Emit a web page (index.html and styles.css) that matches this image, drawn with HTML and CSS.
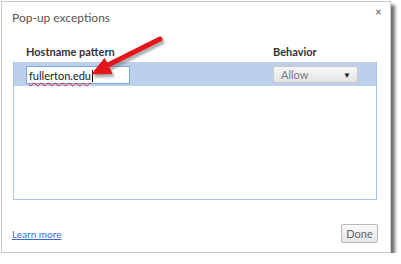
FILE: index.html
```html
<!DOCTYPE html>
<html lang="en">
<head>
  <meta charset="UTF-8">
  <title>Pop-up exceptions</title>
  <link rel="stylesheet" href="styles.css">
</head>
<body>
  <div class="dialog">
    <div class="header">
      <span class="title">Pop-up exceptions</span>
      <span class="close">&#x2715;</span>
    </div>

    <div class="content">
      <div class="columns">
        <span>Hostname pattern</span>
        <span>Behavior</span>
      </div>
      <div class="list">
        <div class="row selected">
          <div class="host-input"><span class="typed">fullerton.edu</span><span class="caret"></span></div>
          <div class="behavior-select">
            <span>Allow</span>
            <span class="drop">&#9660;</span>
          </div>
        </div>
      </div>
    </div>

    <div class="footer">
      <a href="#" class="learn">Learn more</a>
      <button class="done">Done</button>
    </div>
  </div>

  <svg class="pointer" width="401" height="264" viewBox="0 0 401 264">
    <defs>
      <filter id="soft" x="-20%" y="-20%" width="140%" height="140%">
        <feGaussianBlur stdDeviation="1.2"/>
      </filter>
    </defs>
    <g transform="translate(2,3)" fill="#777" stroke="#777" opacity="0.6" filter="url(#soft)">
      <line x1="160" y1="39" x2="106" y2="66" stroke-width="5" stroke-linecap="round"/>
      <polygon points="92,74 104.5,58.5 112,73.5" stroke-width="1"/>
    </g>
    <g fill="#e3161b" stroke="#e3161b">
      <line x1="160" y1="39" x2="106" y2="66" stroke-width="5" stroke-linecap="round"/>
      <polygon points="92,74 104.5,58.5 112,73.5" stroke-width="1" stroke-linejoin="round"/>
    </g>
  </svg>
</body>
</html>
```

FILE: styles.css
```css
body {
  margin: 0;
  background: #fff;
  font-family: Lato, "Noto Sans", sans-serif;
  position: relative;
}
.dialog {
  box-sizing: border-box;
  width: 390px;
  height: 252px;
  margin: 1px 0 0 1px;
  background: #fff;
  border: 1px solid #c8c8c8;
  box-shadow: 4px 4px 3px rgba(0, 0, 0, 0.55);
  display: flex;
  flex-direction: column;
}
.header {
  height: 36px;
  padding: 8px 8px 0 10px;
  box-sizing: border-box;
  display: flex;
  justify-content: space-between;
  align-items: flex-start;
}
.title {
  font-size: 12px;
  color: #555;
}
.close {
  font-size: 8px;
  font-weight: bold;
  color: #777;
  margin-top: -3px;
}
.content {
  padding: 0 13px 0 11px;
}
.columns {
  height: 24px;
  box-sizing: border-box;
  display: grid;
  grid-template-columns: 247px 1fr;
  align-items: end;
  padding: 0 0 4px 13px;
  font-size: 11px;
  font-weight: bold;
  color: #333;
}
.list {
  height: 138px;
  box-sizing: border-box;
  border: 1px solid #a9c7ee;
  border-top: none;
}
.row {
  height: 24px;
  box-sizing: border-box;
  display: grid;
  grid-template-columns: 247px 85px;
  align-items: start;
  padding: 4px 0 0 12px;
}
.selected {
  background: #bcd0ec;
}
.host-input {
  width: 104px;
  height: 18px;
  box-sizing: border-box;
  background: #fff;
  border: 1px solid #7ba7e4;
  font-size: 11px;
  color: #222;
  padding: 1px 0 0 2px;
  display: flex;
  align-items: center;
}
.typed {
  text-decoration: underline wavy #e02020;
  text-decoration-thickness: 1px;
  text-underline-offset: 2px;
}
.caret {
  display: inline-block;
  width: 1px;
  height: 12px;
  background: #000;
  margin-left: 1px;
}
.behavior-select {
  height: 17px;
  box-sizing: border-box;
  border: 1px solid #c9c9c9;
  border-radius: 2px;
  background: linear-gradient(#f8f8f8, #e4e4e4);
  display: flex;
  justify-content: space-between;
  align-items: center;
  padding: 0 6px 0 7px;
  font-size: 11px;
  color: #7a7a7a;
}
.drop {
  font-size: 8px;
  color: #222;
}
.footer {
  flex: 1;
  display: flex;
  justify-content: space-between;
  align-items: flex-end;
  padding: 0 12px 9px 10px;
}
.learn {
  font-size: 10px;
  color: #3a6ad8;
  margin-bottom: 3px;
}
.done {
  width: 37px;
  height: 19px;
  padding: 0;
  font-family: inherit;
  font-size: 11px;
  color: #666;
  background: linear-gradient(#fafafa, #e6e6e6);
  border: 1px solid #b8b8b8;
  border-radius: 2px;
}
.pointer {
  position: absolute;
  left: 0;
  top: 0;
}
```
